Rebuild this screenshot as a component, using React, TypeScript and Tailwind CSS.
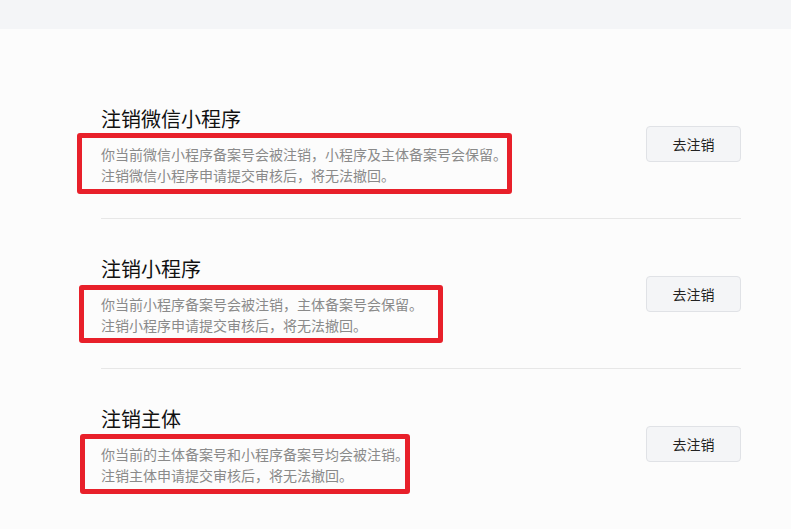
const sections = [
  {
    title: "注销微信小程序",
    lines: ["你当前微信小程序备案号会被注销，小程序及主体备案号会保留。", "注销微信小程序申请提交审核后，将无法撤回。"],
    mark: "-left-[24px] -top-[11px] w-[435px] h-[61px]",
  },
  {
    title: "注销小程序",
    lines: ["你当前小程序备案号会被注销，主体备案号会保留。", "注销小程序申请提交审核后，将无法撤回。"],
    mark: "-left-[22px] -top-[9px] w-[364px] h-[58px]",
  },
  {
    title: "注销主体",
    lines: ["你当前的主体备案号和小程序备案号均会被注销。", "注销主体申请提交审核后，将无法撤回。"],
    mark: "-left-[21px] -top-[10px] w-[330px] h-[60px]",
  },
];

export default function App() {
  return (
    <div className="min-h-screen bg-[#fcfcfc] font-['Noto_Sans_CJK_SC',sans-serif]">
      <div className="h-[29px] bg-[#f4f5f7]" />
      <div className="ml-[101px] w-[640px] pt-[40px]">
        {sections.map((s, i) => (
          <div
            key={s.title}
            className={`flex items-center justify-between pt-[36px] pb-[32px] ${
              i < sections.length - 1 ? "border-b border-[#e7e7e7]" : ""
            }`}
          >
            <div>
              <h3 className="text-[20px] leading-[28px] text-[#111]">{s.title}</h3>
              <div className="relative mt-[11px]">
                {/* red annotation frame */}
                <div className={`absolute ${s.mark} rounded-[3px] border-[5px] border-[#e8202a]`} />
                {s.lines.map((l) => (
                  <p key={l} className="text-[14px] leading-[21px] text-[#8a8a8a]">
                    {l}
                  </p>
                ))}
              </div>
            </div>
            <button className="-mt-[3px] h-[36px] w-[95px] rounded-[4px] border border-[#e0e2e6] bg-[#f4f5f7] text-[14px] text-[#222]">
              去注销
            </button>
          </div>
        ))}
      </div>
    </div>
  );
}
